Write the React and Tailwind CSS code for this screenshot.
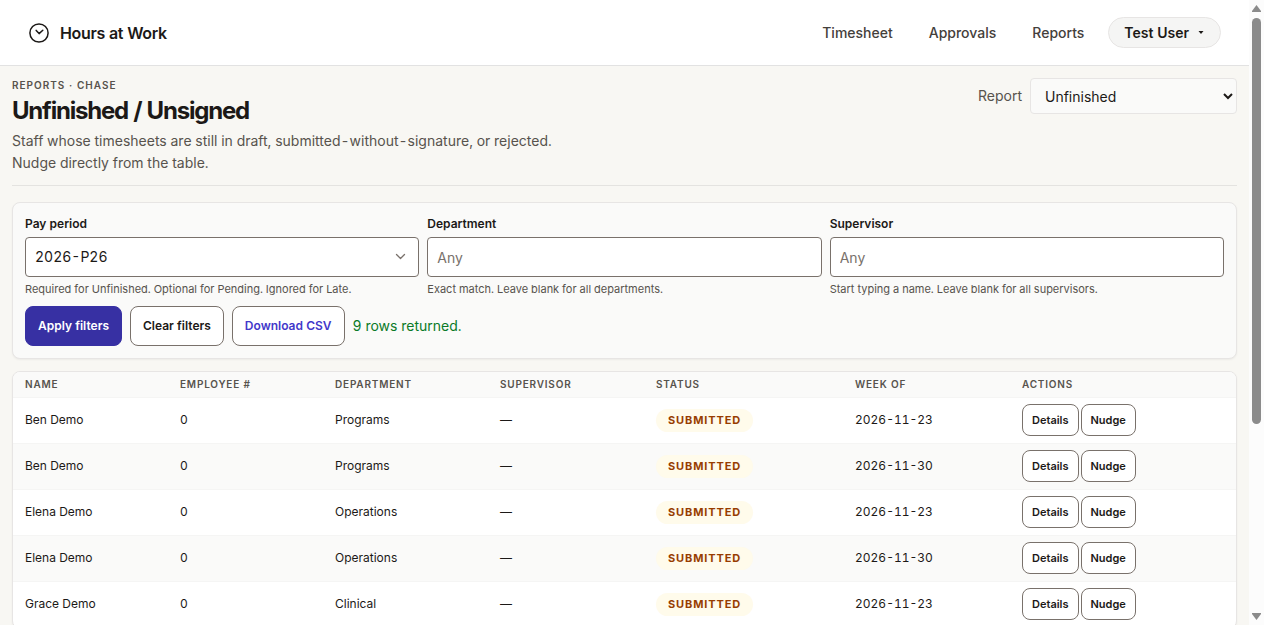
import React from "react";

const rows = [
  ["Ben Demo", "Programs", "2026-11-23"],
  ["Ben Demo", "Programs", "2026-11-30"],
  ["Elena Demo", "Operations", "2026-11-23"],
  ["Elena Demo", "Operations", "2026-11-30"],
  ["Grace Demo", "Clinical", "2026-11-23"],
];

function ClockLogo() {
  return (
    <svg className="size-[22px]" viewBox="0 0 22 22" fill="none" stroke="currentColor" strokeWidth="1.5" strokeLinecap="round" strokeLinejoin="round" aria-hidden="true">
      <circle cx="11" cy="11" r="9.100" />
      <path d="M8.200 8.400l2.900 3.200 3.700-3.400" />
    </svg>
  );
}

function Header() {
  return (
    <header className="flex h-[66px] shrink-0 items-center justify-between border-b border-[#e2e2e2] bg-white px-7">
      <a href="#" className="flex items-center gap-2.5 text-base font-semibold tracking-[-0.02em] text-stone-900">
        <ClockLogo />
        Hours at Work
      </a>
      <nav className="flex items-center gap-6 text-sm font-medium text-stone-700">
        <div className="flex gap-9">
          <a href="#">Timesheet</a>
          <a href="#">Approvals</a>
          <a href="#">Reports</a>
        </div>
        <button type="button" className="flex h-[31px] items-center gap-2 rounded-full border border-stone-200 bg-stone-100 px-[15px] font-semibold text-stone-900">
          Test User
          <svg className="h-1 w-2" viewBox="0 0 8 4" fill="currentColor" aria-hidden="true">
            <path d="M1.500 0h5L4 3z" />
          </svg>
        </button>
      </nav>
    </header>
  );
}

function PageHeading() {
  return (
    <section className="flex items-start justify-between border-b border-[#e4e3e0] pb-[11px]">
      <div>
        <p className="text-[10px] leading-[15px] font-semibold tracking-widest text-stone-600">REPORTS · CHASE</p>
        <h1 className="mt-0.5 mb-1 text-2xl leading-[31px] font-bold tracking-tighter text-stone-900">Unfinished / Unsigned</h1>
        <p className="max-w-[560px] text-sm leading-[22px] text-stone-600">
          Staff whose timesheets are still in draft, submitted-without-signature, or rejected. Nudge directly from the table.
        </p>
      </div>
      <div className="flex items-center gap-2">
        <label htmlFor="report" className="text-sm text-stone-600">Report</label>
        <select id="report" className="h-9 w-[207px] rounded border border-stone-200 bg-stone-50 pl-2.5 text-sm text-stone-900">
          <option>Unfinished</option>
        </select>
      </div>
    </section>
  );
}

function Field({ id, label, hint, children }) {
  return (
    <div className="flex flex-col">
      <label htmlFor={id} className="text-xs leading-[18px] font-semibold text-stone-900">{label}</label>
      <div className="mt-1 grid">{children}</div>
      <p className="mt-1 text-[11px] leading-[17px] text-stone-600">{hint}</p>
    </div>
  );
}

const fieldBox = "h-10 w-full rounded border border-stone-500 bg-white px-[9px] text-sm text-stone-900 placeholder:text-stone-500";

function Filters() {
  return (
    <form className="mt-4 rounded-lg border border-stone-200 bg-stone-50 p-3 shadow-xs" onSubmit={(e) => e.preventDefault()}>
      <div className="grid grid-cols-3 gap-2">
        <Field id="period" label="Pay period" hint="Required for Unfinished. Optional for Pending. Ignored for Late.">
          <select id="period" className={`${fieldBox} col-start-1 row-start-1 appearance-none`}>
            <option>2026-P26</option>
          </select>
          <svg className="pointer-events-none col-start-1 row-start-1 mr-3 size-3 self-center justify-self-end text-stone-500" viewBox="0 0 12 12" fill="none" stroke="currentColor" strokeWidth="1.3" strokeLinecap="round" strokeLinejoin="round" aria-hidden="true">
            <path d="M1.500 3.500l4 4 4-4" />
          </svg>
        </Field>
        <Field id="department" label="Department" hint="Exact match. Leave blank for all departments.">
          <input id="department" type="text" placeholder="Any" className={fieldBox} />
        </Field>
        <Field id="supervisor" label="Supervisor" hint="Start typing a name. Leave blank for all supervisors.">
          <input id="supervisor" type="text" placeholder="Any" className={fieldBox} />
        </Field>
      </div>
      <div className="mt-2 flex items-center gap-2 text-xs font-semibold text-stone-900">
        <button type="submit" className="h-10 rounded-lg border border-[#3730a3] bg-[#3730a3] px-3 text-white">Apply filters</button>
        <button type="button" className="h-10 rounded-lg border border-stone-500 bg-white px-3">Clear filters</button>
        <button type="button" className="h-10 rounded-lg border border-stone-500 bg-white px-3 text-[#4338ca]">Download CSV</button>
        <p role="status" className="text-sm font-normal text-[#0a7a28]">9 rows returned.</p>
      </div>
    </form>
  );
}

const th = "p-0 px-3 text-left font-semibold";
const action = "h-8 rounded-lg border border-stone-500 bg-white px-[9px] text-[11px] font-semibold text-stone-900";

function Results() {
  return (
    <div className="mt-3 overflow-hidden rounded-lg border border-stone-200 bg-white shadow-xs">
      <table className="w-full table-fixed border-collapse text-xs text-stone-900">
        <colgroup>
          <col className="w-[155px]" />
          <col className="w-[155px]" />
          <col className="w-[165px]" />
          <col className="w-[156px]" />
          <col className="w-[199px]" />
          <col className="w-[167px]" />
          <col className="w-[226px]" />
        </colgroup>
        <thead>
          <tr className="h-[25px] border-b border-stone-100 bg-stone-50 text-[10px] tracking-[0.08em] text-stone-600">
            <th className={th}>NAME</th>
            <th className={th}>EMPLOYEE #</th>
            <th className={th}>DEPARTMENT</th>
            <th className={th}>SUPERVISOR</th>
            <th className={th}>STATUS</th>
            <th className={th}>WEEK OF</th>
            <th className={th}>ACTIONS</th>
          </tr>
        </thead>
        <tbody>
          {rows.map(([name, department, week], i) => (
            <tr key={i} className="h-[46px] border-b border-stone-100 even:bg-stone-50">
              <td className="px-3">{name}</td>
              <td className="px-3">0</td>
              <td className="px-3">{department}</td>
              <td className="px-3">—</td>
              <td className="px-3">
                <span className="inline-flex h-[23px] items-center rounded-full bg-amber-50 px-3 text-[11px] font-bold tracking-[0.08em] text-amber-800">SUBMITTED</span>
              </td>
              <td className="px-3">{week}</td>
              <td className="px-3">
                <div className="flex gap-0.5">
                  <button type="button" className={action}>Details</button>
                  <button type="button" className={action}>Nudge</button>
                </div>
              </td>
            </tr>
          ))}
        </tbody>
      </table>
    </div>
  );
}

function ScrollRail() {
  return (
    <div className="flex w-[15px] shrink-0 flex-col items-center bg-[#fcfcfc] py-[5px] text-[#8b8b8b]" aria-hidden="true">
      <svg className="h-[7px] w-[9px]" viewBox="0 0 9 7" fill="currentColor"><path d="M4.500 0L9 6v1H0V6z" /></svg>
      <div className="flex w-full flex-1 flex-col items-center py-1.5">
        <div className="h-[69%] w-[9px] rounded-full bg-[#8b8b8b]" />
      </div>
      <svg className="h-[7px] w-[9px]" viewBox="0 0 9 7" fill="currentColor"><path d="M4.500 7L9 1V0H0v1z" /></svg>
    </div>
  );
}

export default function App() {
  return (
    <div className="flex h-screen overflow-hidden bg-[#f8f7f3] font-['Inter',sans-serif] tabular-nums">
      <div className="min-w-0 flex-1 overflow-hidden">
        <Header />
        <main className="p-3">
          <PageHeading />
          <Filters />
          <Results />
        </main>
      </div>
      <ScrollRail />
    </div>
  );
}
